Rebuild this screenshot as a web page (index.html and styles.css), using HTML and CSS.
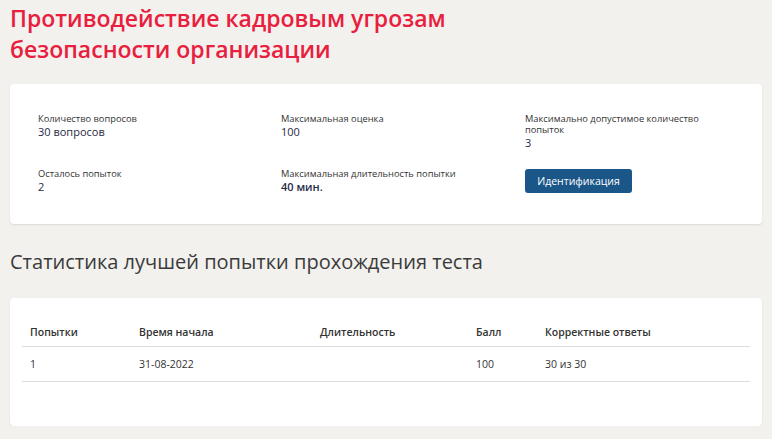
FILE: index.html
```html
<!DOCTYPE html>
<html lang="ru">
<head>
<meta charset="utf-8">
<link rel="stylesheet" href="styles.css">
</head>
<body>
<div class="page">
  <h1 class="title">Противодействие кадровым угрозам<br>безопасности организации</h1>
  <section class="card info">
    <div class="grid">
      <div class="item"><div class="label">Количество вопросов</div><div class="value">30 вопросов</div></div>
      <div class="item"><div class="label">Максимальная оценка</div><div class="value">100</div></div>
      <div class="item"><div class="label">Максимально допустимое количество попыток</div><div class="value">3</div></div>
      <div class="item"><div class="label">Осталось попыток</div><div class="value">2</div></div>
      <div class="item"><div class="label">Максимальная длительность попытки</div><div class="value strong">40 мин.</div></div>
      <div class="item"><button class="btn">Идентификация</button></div>
    </div>
  </section>
  <h2 class="subtitle">Статистика лучшей попытки прохождения теста</h2>
  <section class="card stats">
    <table class="table">
      <thead>
        <tr><th class="c1">Попытки</th><th class="c2">Время начала</th><th class="c3">Длительность</th><th class="c4">Балл</th><th class="c5">Корректные ответы</th></tr>
      </thead>
      <tbody>
        <tr><td>1</td><td>31-08-2022</td><td></td><td>100</td><td>30 из 30</td></tr>
      </tbody>
    </table>
  </section>
</div>
</body>
</html>
```
FILE: styles.css
```css
* { box-sizing: border-box; }
html, body { margin: 0; padding: 0; }
body {
  background: #f2f1ee;
  font-family: "Open Sans", "Noto Sans", sans-serif;
  color: #333;
}
.page { padding: 0 10px; }
.title {
  margin: 0;
  padding-top: 3px;
  font-size: 23px;
  line-height: 31px;
  font-weight: 600;
  color: #e8203e;
}
.card {
  background: #fff;
  border-radius: 4px;
  box-shadow: 0 1px 2px rgba(0,0,0,0.10);
}
.info {
  margin-top: 19px;
  height: 140px;
  padding: 29px 28px 0 28px;
}
.grid {
  display: grid;
  grid-template-columns: 243px 244px 1fr;
  row-gap: 12px;
}
.item { min-height: 43px; }
.label {
  font-size: 9.3px;
  line-height: 11px;
  color: #333;
  max-width: 180px;
  margin-bottom: 1px;
}
.value {
  font-size: 11px;
  line-height: 14px;
  color: #1f2a44;
}
.value.strong { font-weight: 600; }
.btn {
  margin-top: 0;
  background: #1b5689;
  color: #fff;
  border: none;
  border-radius: 3px;
  font-family: inherit;
  font-size: 10.5px;
  font-weight: 500;
  height: 24px;
  width: 107px;
  padding: 0;
}
.subtitle {
  margin: 26px 0 0 0;
  font-size: 20px;
  line-height: 24px;
  font-weight: 400;
  color: #3b3b3b;
}
.stats {
  margin-top: 24px;
  height: 128px;
  padding: 22px 12px 0 12px;
}
.table {
  width: 100%;
  border-collapse: collapse;
  font-size: 10.5px;
}
.table th {
  text-align: left;
  font-weight: 600;
  color: #333;
  padding: 4px 8px 6px 8px;
  height: 26px;
  border-bottom: 1px solid #ddd;
}
.table td {
  text-align: left;
  padding: 0 8px;
  height: 35px;
  border-bottom: 1px solid #ddd;
  color: #333;
}
.c1 { width: 109px; }
.c2 { width: 181px; }
.c3 { width: 156px; }
.c4 { width: 69px; }
```
